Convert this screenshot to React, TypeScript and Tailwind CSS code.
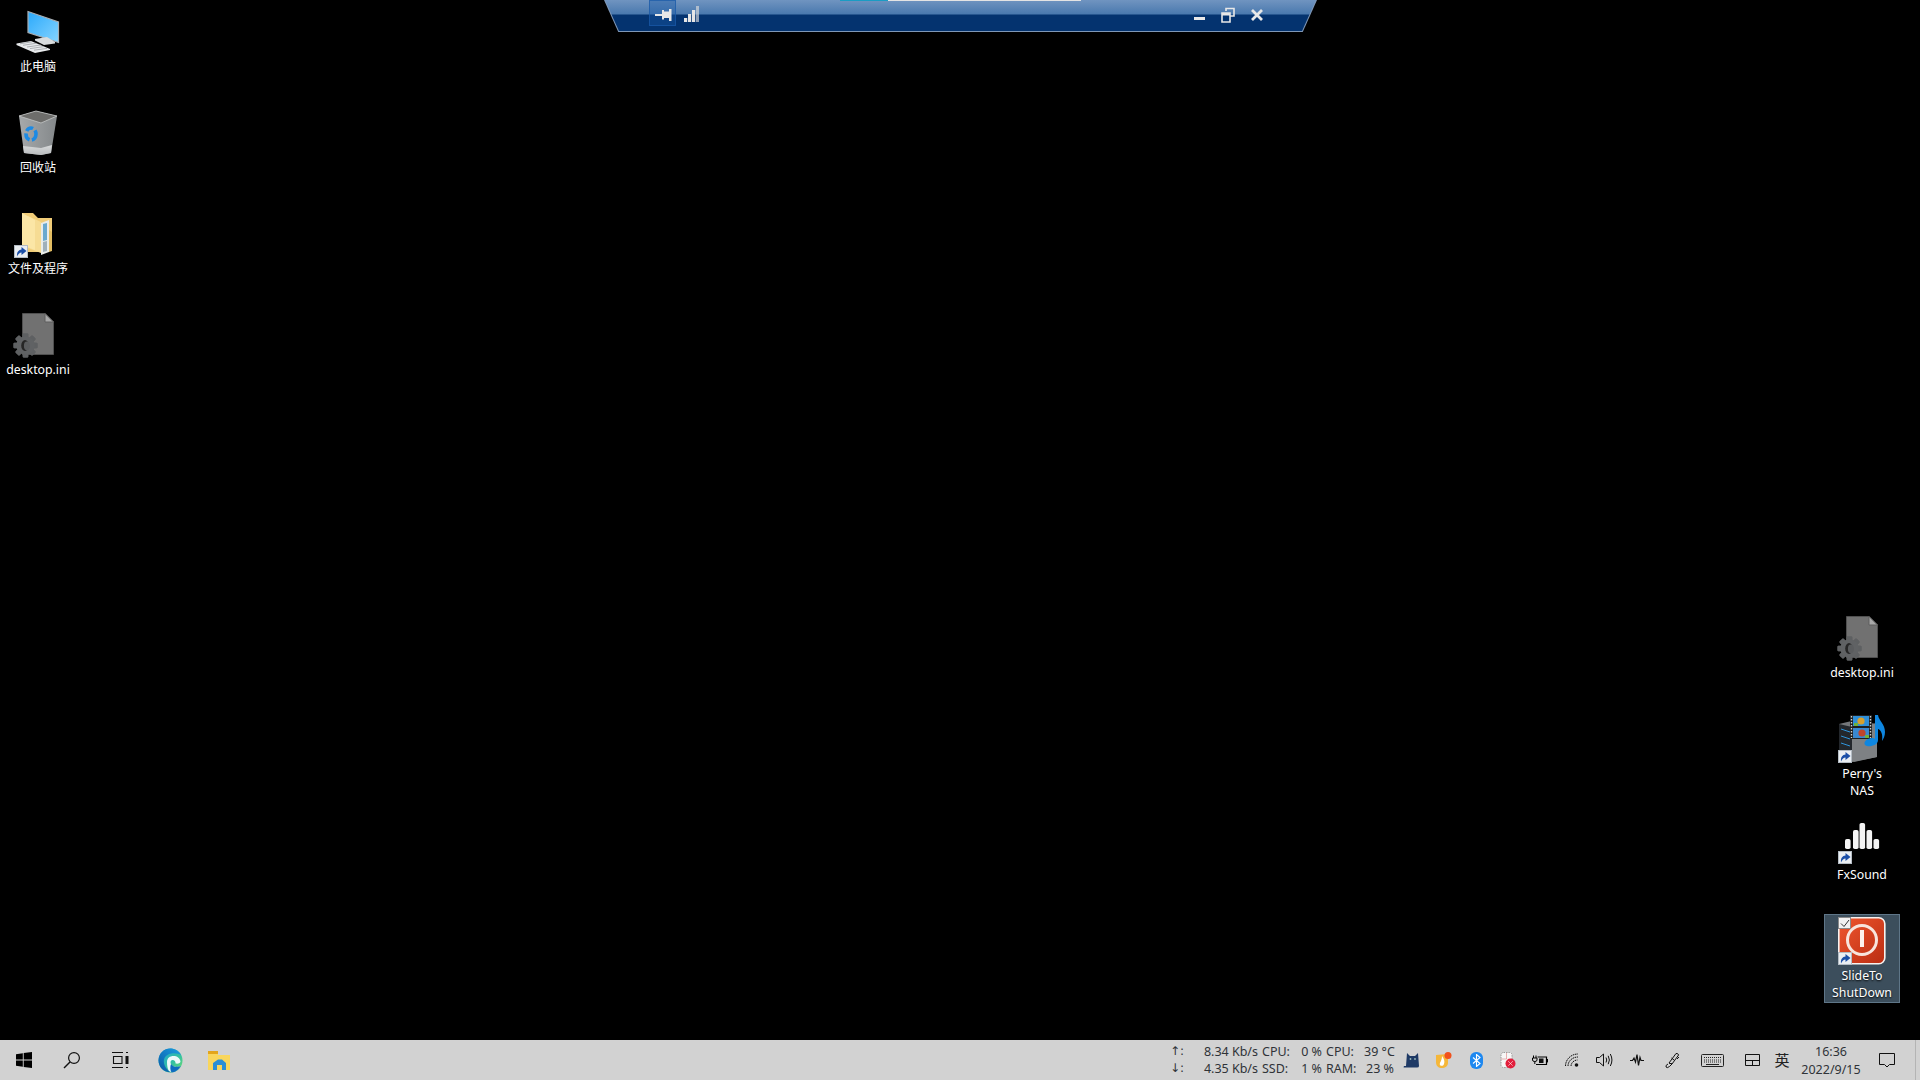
import React from "react";

const Shortcut = () => (
  <span className="absolute left-0 bottom-0 w-[14px] h-[13px] bg-[#eaeef2] border border-[#b4bcc4] flex items-center justify-center">
    <svg width="12" height="11" viewBox="0 0 12 11">
      <path d="M2 10.5 C1.6 6 3.5 4 6.5 3.6 L6.5 1 L11.5 5 L6.5 9 L6.5 6.4 C4.6 6.5 3.4 7.8 2 10.5 Z" fill="#1b4fa8" />
    </svg>
  </span>
);

const Gear = ({ cx, cy }: { cx: number; cy: number }) => {
  const teeth = [0, 45, 90, 135, 180, 225, 270, 315];
  return (
    <g transform={`translate(${cx} ${cy})`}>
      {teeth.map((a) => (
        <rect key={a} x="-2.8" y="-12" width="5.6" height="24" rx="1" fill="#5e6062" transform={`rotate(${a})`} />
      ))}
      <circle r="9.2" fill="#606264" />
      <ellipse cx="-0.5" cy="0" rx="3.8" ry="5.4" fill="#262626" />
      <ellipse cx="1.4" cy="0.3" rx="3" ry="4.4" fill="#5a5c5e" />
    </g>
  );
};

const DocIcon = () => (
  <svg width="48" height="48" viewBox="0 0 48 48" className="block overflow-visible">
    <path d="M8.5 2.5 H31 L39.5 11 V43.5 H8.5 Z" fill="#717171" stroke="#505050" />
    <path d="M31 2.5 V11 H39.5 Z" fill="#a8a8a8" stroke="#5e5e5e" />
    <Gear cx={11.5} cy={34.5} />
  </svg>
);

const ComputerIcon = () => (
  <svg width="48" height="48" viewBox="0 0 48 48" className="block">
    <defs>
      <linearGradient id="scr" x1="0" y1="0" x2="1" y2="1">
        <stop offset="0" stopColor="#2aa9fb" />
        <stop offset="1" stopColor="#86d4ff" />
      </linearGradient>
    </defs>
    <path d="M14 3.5 L44.5 14 V34.5 L14 24.5 Z" fill="url(#scr)" stroke="#a8adb2" strokeWidth="1.2" />
    <path d="M21 31 L33 29 L41 34 L41 35.5 L30 37 L21 32.5 Z" fill="#d9dcde" />
    <path d="M2.5 35.5 L17 33 L36 41 L36 42 L21 45 L2.5 37 Z" fill="#e8eaec" />
    <path d="M6 35.8 L18 33.8 M9 37.3 L22 35.3 M13 39 L27 37 M16 40.6 L30 38.6 M20 42.2 L33 40.4" stroke="#9da1a5" strokeWidth="0.8" />
  </svg>
);

const BinIcon = () => (
  <svg width="48" height="48" viewBox="0 0 48 48" className="block">
    <defs>
      <linearGradient id="binb" x1="0" y1="0" x2="1" y2="0">
        <stop offset="0" stopColor="#a6a9ab" />
        <stop offset="1" stopColor="#84888a" />
      </linearGradient>
      <linearGradient id="binl" x1="0" y1="0" x2="0" y2="1">
        <stop offset="0" stopColor="#d8dadb" />
        <stop offset="1" stopColor="#b8bbbd" />
      </linearGradient>
    </defs>
    <path d="M5 7 L22 2 L43 7 L37 44 L27 46 L10 44 Z" fill="url(#binb)" />
    <path d="M5 7 L22 2 L43 7 L27 14 Z" fill="#6d6d6b" stroke="#c4c6c7" strokeWidth="0.8" />
    <path d="M9 37 L27 39 L38 36 L37 44 L27 46 L10 44 Z" fill="url(#binl)" />
    <ellipse cx="17" cy="25" rx="5" ry="6" fill="none" stroke="#1c8ae4" strokeWidth="3.6" strokeDasharray="7.5 2.5" />
  </svg>
);

const FolderIcon = () => (
  <svg width="48" height="48" viewBox="0 0 48 48" className="block">
    <path d="M8 3 H19 L24 8 H38 V38 L24 42 H12 L8 38 Z" fill="#f1cd78" />
    <path d="M14 6 L27 12 V43 L14 38 Z" fill="#f6dc94" />
    <path d="M8 3 L21 10 V40 L8 35 Z" fill="#fbe6a6" />
    <path d="M27 13 L35 10 V42 L27 45 Z" fill="#e9ecea" />
    <path d="M29 14 L33 13 V30 L29 31 Z" fill="#6aa9cf" />
    <path d="M29 32 L33 31 V41 L29 42 Z" fill="#9fb0ba" />
    <path d="M35 20 L38 22 V41 L35 42 Z" fill="#e3bd62" />
  </svg>
);

const NasIcon = () => (
  <svg width="48" height="48" viewBox="0 0 48 48" className="block overflow-visible">
    <path d="M1 9 L22 4 L39 10 V42 L16 47 L1 41 Z" fill="#74777a" />
    <path d="M1 9 L14 12 V47 L1 41 Z" fill="#23272c" />
    <path d="M3 14 L12 17 M3 21 L12 24 M3 28 L12 31" stroke="#2f95dc" strokeWidth="1" />
    <path d="M14 12 L39 8 V42 L14 47 Z" fill="#7e8184" />
    <rect x="12" y="0" width="22" height="24" fill="#1e1e1e" />
    <rect x="15" y="1" width="16" height="10" fill="#2f8fd8" />
    <rect x="15" y="13" width="16" height="10" fill="#3a88d0" />
    <circle cx="23" cy="6" r="3.6" fill="#d9a02c" />
    <circle cx="24" cy="18" r="3.6" fill="#c0452a" />
    <path d="M16 8 h4 v3 h-4 Z M27 20 h4 v3 h-4 Z" fill="#6fb23c" />
    <path d="M13.5 1 V23 M32.5 1 V23" stroke="#cfcfcf" strokeWidth="1.4" strokeDasharray="1.5 1.5" />
    <path d="M37 0 L40 0 C41 6 47 9 47 17 C47 21 45.5 24 44 26 C45 20 43.5 15 40 14 V25 C40 30 33 32 29 31 C25 30 26 26 30 24 C33 22.6 36 23 37 24 Z" fill="#0e86e0" />
  </svg>
);

const FxIcon = () => (
  <svg width="48" height="48" viewBox="0 0 48 48" className="block">
    <g fill="#f4f4f4">
      <rect x="7" y="23" width="5.6" height="10" rx="1.8" />
      <rect x="15" y="14" width="5.6" height="19" rx="1.8" />
      <rect x="21.5" y="7" width="5.6" height="26" rx="1.8" />
      <rect x="28.5" y="14" width="5.6" height="19" rx="1.8" />
      <rect x="35.5" y="23" width="5.6" height="10" rx="1.8" />
    </g>
  </svg>
);

const SlideIcon = () => (
  <svg width="48" height="48" viewBox="0 0 48 48" className="block">
    <defs>
      <linearGradient id="slide" x1="0" y1="0" x2="1" y2="1">
        <stop offset="0" stopColor="#f0562e" />
        <stop offset="1" stopColor="#b92d12" />
      </linearGradient>
    </defs>
    <rect x="0.8" y="0.8" width="46" height="46" rx="6" fill="url(#slide)" stroke="#f7f2ef" strokeWidth="1.6" />
    <circle cx="24" cy="23" r="14.5" fill="none" stroke="#f8e4dc" strokeWidth="3" />
    <rect x="22" y="13" width="4" height="17" fill="#fdf3ee" />
  </svg>
);

const labelCls =
  "w-full text-center text-white leading-[17px] [text-shadow:0_1px_2px_#000] font-['Noto_Sans','Noto_Sans_CJK_SC',sans-serif]";

type Item = { label: string[]; icon: React.ReactNode; shortcut?: boolean; selected?: boolean; cjk?: boolean };

const DesktopItem = ({ item, top }: { item: Item; top: string }) => (
  <div className={`w-[76px] h-[101px] flex flex-col ${top}`}>
    <div className={item.selected ? "h-[89px] bg-[#3c4e5c] border border-[#5f7688] flex flex-col items-center pt-[2px]" : "flex flex-col items-center"}>
      <div className="relative w-12 h-12 shrink-0">
        {item.icon}
        {item.selected && (
          <span className="absolute left-0 top-0 w-[13px] h-[12px] bg-[#f2f2f2] border border-[#8a8a8a] flex items-center justify-center">
            <svg width="10" height="9" viewBox="0 0 10 9">
              <path d="M1 4.5 L4 7.5 L9 1" fill="none" stroke="#333" strokeWidth="1" />
            </svg>
          </span>
        )}
        {item.shortcut && <Shortcut />}
      </div>
      <div className={`${labelCls} ${item.cjk ? "text-[12px]" : "text-[12.3px]"} mt-[2px]`}>
        {item.label.map((l) => (
          <div key={l}>{l}</div>
        ))}
      </div>
    </div>
  </div>
);

const leftItems: Item[] = [
  { label: ["此电脑"], icon: <ComputerIcon />, cjk: true },
  { label: ["回收站"], icon: <BinIcon />, cjk: true },
  { label: ["文件及程序"], icon: <FolderIcon />, shortcut: true, cjk: true },
  { label: ["desktop.ini"], icon: <DocIcon /> },
];

const rightItems: Item[] = [
  { label: ["desktop.ini"], icon: <DocIcon /> },
  { label: ["Perry's", "NAS"], icon: <NasIcon />, shortcut: true },
  { label: ["FxSound"], icon: <FxIcon />, shortcut: true },
  { label: ["SlideTo", "ShutDown"], icon: <SlideIcon />, shortcut: true, selected: true },
];

const ControlBar = () => (
  <div className="absolute left-[604px] top-0 w-[713px] h-8 bg-[#7f97b6] [clip-path:polygon(0_0,100%_0,98%_100%,2%_100%)]">
    <div className="relative h-[31px] bg-[linear-gradient(#7094c0_0,#4a79ae_14px,#04336f_15px,#04336f_100%)] [clip-path:polygon(0.15%_0,99.85%_0,97.9%_100%,2.1%_100%)] flex items-start pl-[45px] pr-[46px]">
      <div className="absolute left-[236px] top-0 flex h-px">
        <div className="w-12 bg-[#1a9cc4]" />
        <div className="w-[193px] bg-[#e4e4e4]" />
      </div>
      <div className="w-[27px] h-[26px] bg-[#1a5aa8]/40 border border-[#1a5aa8]/70 flex items-center justify-center pl-[3px] pt-[4px]">
        <svg width="18" height="14" viewBox="0 0 18 14">
          <path d="M0 6 H8 V8 H0 Z" fill="#e8e8e8" />
          <path d="M7 2 H9 V3.5 H14 V1 H16.5 V13 H14 V10 H9 V11.5 H7 Z" fill="#e8e8e8" />
        </svg>
      </div>
      <div className="ml-[8px] mt-[6px]">
        <svg width="15" height="16" viewBox="0 0 15 16">
          <path d="M0 12 h3.2 v4 h-3.2 Z M4 8 h3.2 v8 h-3.2 Z M8 4 h3.2 v12 h-3.2 Z" fill="#e6e6e6" />
          <path d="M12 0 h3 v16 h-3 Z" fill="#dcdcdc" opacity="0.65" />
        </svg>
      </div>
      <div className="ml-auto flex">
        <div className="w-[28px] h-[26px] relative flex items-end justify-center pb-[6px]">
          <div className="w-[11px] h-[3px] bg-[#e8e8e8]" />
        </div>
        <div className="w-[30px] h-[26px] flex items-center justify-center pt-[3px]">
          <svg width="14" height="16" viewBox="0 0 14 16">
            <path d="M5 4 V1.5 H13 V9 H9" fill="none" stroke="#e8e8e8" strokeWidth="1.6" />
            <path d="M1 6 H9 V15 H1 Z" fill="none" stroke="#e8e8e8" strokeWidth="1.6" />
            <path d="M1 6 H9 V8.5 H1 Z" fill="#e8e8e8" />
          </svg>
        </div>
        <div className="w-7 h-[26px] flex items-center justify-center pt-[3px]">
          <svg width="14" height="12" viewBox="0 0 14 12">
            <path d="M2 1 L12 11 M12 1 L2 11" fill="none" stroke="#e8e8e8" strokeWidth="2.8" />
          </svg>
        </div>
      </div>
    </div>
  </div>
);

const Slot = ({ w, children }: { w: string; children: React.ReactNode }) => (
  <div className={`${w} h-10 flex items-center justify-center shrink-0`}>{children}</div>
);

const WinLogo = () => (
  <svg width="16" height="16" viewBox="0 0 16 16">
    <path d="M0 2.2 L6.8 1.2 V7.4 H0 Z M7.7 1.1 L16 0 V7.4 H7.7 Z M0 8.4 H6.8 V14.7 L0 13.8 Z M7.7 8.4 H16 V16 L7.7 14.9 Z" fill="#000" />
  </svg>
);
const SearchI = () => (
  <svg width="18" height="18" viewBox="0 0 18 18">
    <circle cx="11" cy="7" r="5.4" fill="none" stroke="#111" strokeWidth="1.2" />
    <path d="M7 11 L1 17" stroke="#111" strokeWidth="1.4" />
  </svg>
);
const TaskView = () => (
  <svg width="17" height="17" viewBox="0 0 17 17">
    <path d="M0 0.5 H11 M0 15.5 H11 M1.5 4.5 H10 V11.5 H1.5 Z M14 0.5 H16 M14 15.5 H16" fill="none" stroke="#111" strokeWidth="1.1" />
    <rect x="13.5" y="4" width="3" height="8" fill="#111" />
  </svg>
);
const Edge = () => (
  <svg width="25" height="25" viewBox="0 0 25 25">
    <defs>
      <linearGradient id="eg1" x1="0" y1="1" x2="1" y2="0">
        <stop offset="0" stopColor="#0c59a4" />
        <stop offset="1" stopColor="#1b9de2" />
      </linearGradient>
      <linearGradient id="eg2" x1="0" y1="0" x2="1" y2="1">
        <stop offset="0" stopColor="#1b9de2" />
        <stop offset="0.6" stopColor="#35c1a0" />
        <stop offset="1" stopColor="#73e06c" />
      </linearGradient>
    </defs>
    <circle cx="12.5" cy="12.5" r="12" fill="url(#eg2)" />
    <path d="M0.5 12 C1 5 6 0.5 12 0.5 C17 0.5 21 3 23 7 C19 4.5 10 4 6.5 10 C4.5 14 7 21 13 24.3 C5.5 24.5 0.5 19 0.5 12 Z" fill="url(#eg1)" />
    <path d="M9 14 C9 10 12 8 15.5 8 C19 8 22 10 22.5 13.5 C22.5 15 20.5 16 17.5 15.5 C17.8 14.2 17 12 14.5 12 C12.2 12 11.8 15.5 14 17.5 C16.5 19.5 20 19.2 22.5 18 C20 22.5 15 25.5 11 23 C9.5 21 9 17 9 14 Z" fill="#f4fbfd" opacity="0.97" />
    <path d="M13.5 24.4 C17.5 24.4 21 21.5 22.8 18 C19.5 19.5 15 19 13 16 C12 18.5 12 22 13.5 24.4 Z" fill="#0e6cc0" />
  </svg>
);
const Explorer = () => (
  <svg width="23" height="21" viewBox="0 0 23 21">
    <path d="M0 3 H10 V5 H22 V20 H0 Z" fill="#f9d65c" />
    <path d="M0 1 H10 V4 H0 Z" fill="#e3a51b" />
    <path d="M5 20 V13 L10 9.5 H14 L18 13 V20 H14 V15 H9 V20 Z" fill="#2a8fd4" />
  </svg>
);
const Cat = () => (
  <svg width="18" height="16" viewBox="0 0 18 16">
    <path d="M4 1 L7 4 H12 L15 1 L16 14 Q16 15.5 14 15.5 H1 Q0 15.5 1 14 L3 14 Z" fill="#1f3a66" />
    <circle cx="7.5" cy="7" r="0.9" fill="#9bb" />
    <circle cx="12" cy="7" r="0.9" fill="#9bb" />
  </svg>
);
const Fire = () => (
  <svg width="18" height="17" viewBox="0 0 18 17">
    <path d="M1 3 L13 2 V11 C13 14 10 16 7 16 C3.5 16 1 14 1 10 Z" fill="#f5b73a" />
    <path d="M7 4 C9 7 10 9 9 12 C8.5 14 6 14.5 5 13 C4 11 7 9 7 4 Z" fill="#fff" />
    <circle cx="13" cy="3.5" r="3.5" fill="#f1511b" />
  </svg>
);
const Bt = () => (
  <div className="w-[13px] h-[17px] rounded-[6px] bg-[#1e88f0] flex items-center justify-center">
    <svg width="9" height="13" viewBox="0 0 9 13">
      <path d="M1 3.5 L8 9.5 L4.5 12.5 V0.5 L8 3.5 L1 9.5" fill="none" stroke="#fff" strokeWidth="1.1" />
    </svg>
  </div>
);
const MouseI = () => (
  <svg width="16" height="17" viewBox="0 0 16 17">
    <rect x="1" y="0.5" width="11" height="15" rx="2.5" fill="#f6f6f6" stroke="#888" strokeDasharray="1.5 1" strokeWidth="0.8" />
    <path d="M6.5 1 V7 H1" stroke="#c33" strokeWidth="0.6" fill="none" opacity="0.6" />
    <circle cx="10.5" cy="11.5" r="5" fill="#e21e3c" />
    <path d="M8.5 9.5 L12.5 13.5 M12.5 9.5 L8.5 13.5" stroke="#fff" strokeWidth="1" strokeDasharray="1 0.5" />
  </svg>
);
const Battery = () => (
  <svg width="16" height="11" viewBox="0 0 16 11">
    <path d="M1.5 0.5 V3 M4 0.5 V3 M0.5 3 H5 V5 Q5 6.5 2.8 6.5 Q0.5 6.5 0.5 5 Z M2.8 6.5 V9" fill="none" stroke="#000" strokeWidth="1" />
    <path d="M5.5 2 H14.5 V9.5 H4" fill="none" stroke="#000" strokeWidth="1.2" />
    <rect x="7" y="3.5" width="4.5" height="4.5" fill="#111" />
    <rect x="15" y="4" width="1" height="3.4" fill="#000" />
  </svg>
);
const Wifi = () => (
  <svg width="15" height="14" viewBox="0 0 15 14">
    <path d="M0.5 13 C0.5 6.5 6 1 13 1 M3 13 C3 8 7.5 4 13 4 M6 13 C6 10 9 7 12.5 7" fill="none" stroke="#111" strokeWidth="1" strokeDasharray="1.6 0.7" />
    <circle cx="11.5" cy="12" r="1.8" fill="#111" />
  </svg>
);
const Speaker = () => (
  <svg width="17" height="14" viewBox="0 0 17 14">
    <path d="M0.5 4.5 H3.5 L7.5 1 V13 L3.5 9.5 H0.5 Z" fill="none" stroke="#111" strokeWidth="1" />
    <path d="M10 4.5 Q11.5 7 10 9.5 M12.2 2.8 Q14.6 7 12.2 11.2 M14.3 1 Q17.6 7 14.3 13" fill="none" stroke="#111" strokeWidth="1" />
  </svg>
);
const Wave = () => (
  <svg width="14" height="12" viewBox="0 0 14 12">
    <path d="M0 6.5 H2.5 L4 4 L5.5 8 L7 0.5 L8.5 11.5 L10 3.5 L11 6.5 H14" fill="none" stroke="#111" strokeWidth="1.2" />
  </svg>
);
const Pen = () => (
  <svg width="15" height="17" viewBox="0 0 15 17">
    <path d="M4 11 L11 1.5 Q13 1 13.6 3 L7 12 Z M6.5 6 L9 8" fill="none" stroke="#111" strokeWidth="1" />
    <path d="M4 11 L7 12 L4.5 14.5 Q2 16.5 1 15 Q0.5 13 3 12 M12 7 L14 5" fill="none" stroke="#111" strokeWidth="1" />
  </svg>
);
const Keyboard = () => (
  <svg width="23" height="13" viewBox="0 0 23 13">
    <rect x="0.5" y="0.5" width="22" height="12" rx="1" fill="none" stroke="#222" />
    <path d="M3 3.5 H20 M3 6 H20 M3 8 H20" stroke="#222" strokeDasharray="1 1" />
    <path d="M5 10.5 H18" stroke="#222" />
  </svg>
);
const Tablet = () => (
  <svg width="15" height="12" viewBox="0 0 15 12">
    <path d="M0.5 0.5 H14.5 V11.5 H0.5 Z M0.5 6.5 H14.5 M7.5 6.5 V11.5" fill="none" stroke="#111" />
  </svg>
);
const Notify = () => (
  <svg width="16" height="15" viewBox="0 0 16 15">
    <path d="M0.5 0.5 H15.5 V11.5 H10.5 L8 14 L5.5 11.5 H0.5 Z" fill="none" stroke="#111" />
  </svg>
);

const statCell = "leading-[17px] whitespace-nowrap";
const arrowCell = "leading-[17px] whitespace-nowrap -ml-[3px] text-[12px] font-['DejaVu_Sans',sans-serif]";

const Stats = () => (
  <div className="w-[223px] h-10 shrink-0 pt-[3px] text-[12.5px] text-[#2f3338] font-['Noto_Sans',sans-serif] grid grid-cols-[28px_57px_4px_29px_31px_4px_38px_30px] grid-rows-[17px_17px]">
    <div className={arrowCell}>↑:</div>
    <div className={`${statCell} text-right`}>8.34 Kb/s</div>
    <div />
    <div className={statCell}>CPU:</div>
    <div className={`${statCell} text-right`}>0 %</div>
    <div />
    <div className={statCell}>CPU:</div>
    <div className={`${statCell} text-right`}>39 °C</div>
    <div className={arrowCell}>↓:</div>
    <div className={`${statCell} text-right`}>4.35 Kb/s</div>
    <div />
    <div className={statCell}>SSD:</div>
    <div className={`${statCell} text-right`}>1 %</div>
    <div />
    <div className={statCell}>RAM:</div>
    <div className={`${statCell} text-right`}>23 %</div>
  </div>
);

const Taskbar = () => (
  <div className="h-10 shrink-0 bg-[#d2d2d2] flex items-center">
    <Slot w="w-12"><WinLogo /></Slot>
    <Slot w="w-12"><SearchI /></Slot>
    <Slot w="w-12"><TaskView /></Slot>
    <Slot w="w-12 ml-[2px]"><Edge /></Slot>
    <Slot w="w-12 ml-[1px]"><Explorer /></Slot>
    <div className="ml-auto flex items-center">
      <Stats />
      <Slot w="w-8"><Cat /></Slot>
      <Slot w="w-8"><Fire /></Slot>
      <Slot w="w-8"><Bt /></Slot>
      <Slot w="w-8"><MouseI /></Slot>
      <Slot w="w-8"><Battery /></Slot>
      <Slot w="w-8"><Wifi /></Slot>
      <Slot w="w-8"><Speaker /></Slot>
      <Slot w="w-[34px]"><Wave /></Slot>
      <Slot w="w-[36px]"><Pen /></Slot>
      <Slot w="w-[44px]"><Keyboard /></Slot>
      <Slot w="w-[36px]"><Tablet /></Slot>
      <Slot w="w-6"><span className="text-[15px] text-[#222] font-['Noto_Sans_CJK_SC',sans-serif]">英</span></Slot>
      <div className="w-[74px] h-10 shrink-0 pt-[3px] text-[12.5px] leading-[18px] text-center text-[#2f3338] font-['Noto_Sans',sans-serif]">
        <div>16:36</div>
        <div>2022/9/15</div>
      </div>
      <Slot w="w-[38px]"><Notify /></Slot>
      <div className="w-[14px] h-10 shrink-0 flex justify-start pl-[9px]">
        <div className="w-px h-10 bg-[#b4b4b4]" />
      </div>
    </div>
  </div>
);

export default function App() {
  return (
    <div className="relative w-[1920px] h-[1080px] overflow-hidden bg-black flex flex-col">
      <ControlBar />
      <div className="flex-1 flex justify-between min-h-0">
        <div className="flex flex-col">
          {leftItems.map((it) => (
            <DesktopItem key={it.label[0]} item={it} top="pt-2" />
          ))}
        </div>
        <div className="flex flex-col justify-end pb-[25px] mr-5">
          {rightItems.map((it) => (
            <DesktopItem key={it.label[0]} item={it} top={it.selected ? "" : "pt-[3px]"} />
          ))}
        </div>
      </div>
      <Taskbar />
    </div>
  );
}
